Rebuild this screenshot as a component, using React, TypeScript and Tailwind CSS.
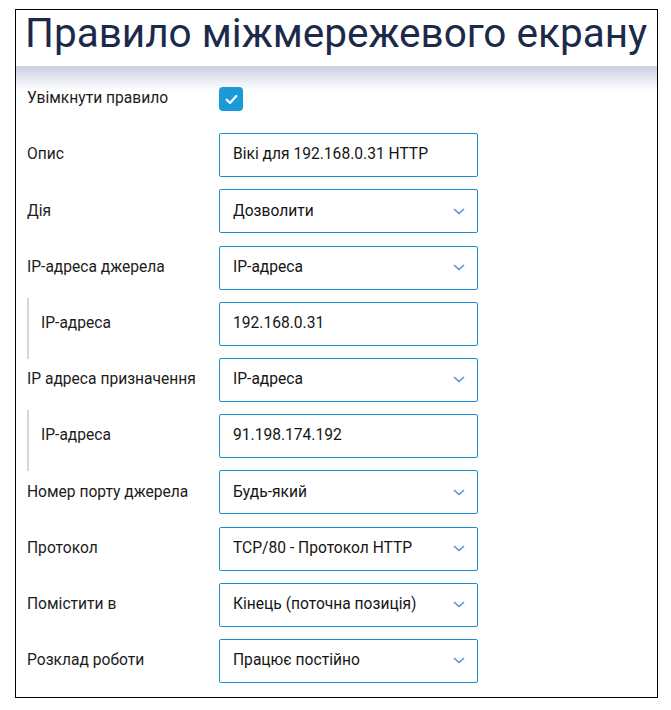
const font = { fontFamily: "Roboto, 'Noto Sans', sans-serif" };

type Row =
  | { kind: "text"; label: string; value: string; sub?: boolean }
  | { kind: "select"; label: string; value: string; sub?: boolean };

const rows: Row[] = [
  { kind: "text", label: "Опис", value: "Вікі для 192.168.0.31 HTTP" },
  { kind: "select", label: "Дія", value: "Дозволити" },
  { kind: "select", label: "IP-адреса джерела", value: "IP-адреса" },
  { kind: "text", label: "IP-адреса", value: "192.168.0.31", sub: true },
  { kind: "select", label: "IP адреса призначення", value: "IP-адреса" },
  { kind: "text", label: "IP-адреса", value: "91.198.174.192", sub: true },
  { kind: "select", label: "Номер порту джерела", value: "Будь-який" },
  { kind: "select", label: "Протокол", value: "TCP/80 - Протокол HTTP" },
  { kind: "select", label: "Помістити в", value: "Кінець (поточна позиція)" },
  { kind: "select", label: "Розклад роботи", value: "Працює постійно" },
];

function Chevron() {
  return (
    <svg viewBox="0 0 12 7" className="h-[7px] w-[12px] shrink-0" aria-hidden>
      <path d="M1 1 L6 5.5 L11 1" fill="none" stroke="#5a8fcb" strokeWidth="1.6" />
    </svg>
  );
}

function FieldRow({ row }: { row: Row }) {
  return (
    <div className="flex h-[44px] items-center">
      <div className="flex h-full w-[192px] shrink-0 items-center">
        {row.sub ? (
          <>
            <span className="-mt-[4px] h-[61px] w-[2px] self-start bg-[#d4d7e1]" />
            <span className="pl-[12px] text-[15.6px] text-[#1c1c1c]">{row.label}</span>
          </>
        ) : (
          <span className="text-[15.6px] text-[#1c1c1c]">{row.label}</span>
        )}
      </div>
      <div className="flex h-[44px] w-[259px] items-center justify-between rounded-[2px] border border-[#1b8fd2] pl-[13px] pr-[12px] text-[15.6px] text-[#151515]">
        <span>{row.value}</span>
        {row.kind === "select" ? <Chevron /> : null}
      </div>
    </div>
  );
}

export default function App() {
  return (
    <div className="min-h-screen bg-white pl-[15px] pt-[9px]" style={font}>
      <div className="h-[689px] w-[643px] border border-black">
        <header className="h-[56px] pl-[9px] pt-[3px]">
          <h1 className="text-[40.5px] leading-[40px] text-[#1b2a4a]">Правило міжмережевого екрану</h1>
        </header>
        <div className="flex flex-col gap-[12.2px] bg-[linear-gradient(to_bottom,#c8cee0,#ffffff_24px)] pl-[11px] pt-[11px]">
          <div className="flex h-[44px] items-center">
            <span className="w-[192px] shrink-0 text-[15.6px] text-[#1c1c1c]">Увімкнути правило</span>
            <span className="flex h-[24px] w-[24px] items-center justify-center rounded-[4px] bg-[#1a9ad8]">
              <svg viewBox="0 0 14 14" className="h-[15px] w-[15px]" aria-hidden>
                <path d="M2.5 7.2 L5.6 10.2 L11.5 3.8" fill="none" stroke="#ffffff" strokeWidth="2" strokeLinecap="round" strokeLinejoin="round" />
              </svg>
            </span>
          </div>
          {rows.map((r, i) => (
            <FieldRow key={i} row={r} />
          ))}
        </div>
      </div>
    </div>
  );
}
